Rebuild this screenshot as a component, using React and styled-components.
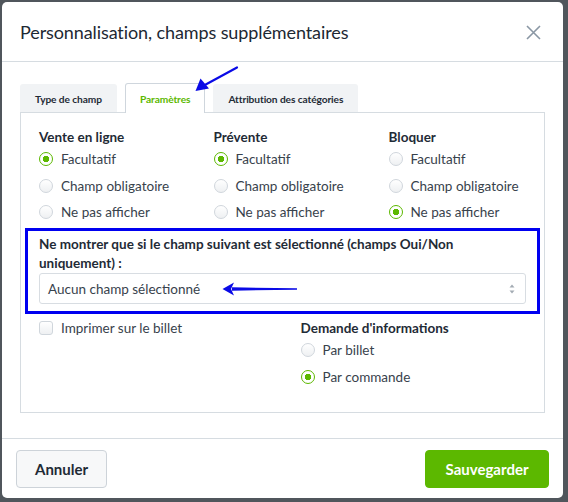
import React from 'react'
import styled, { createGlobalStyle } from 'styled-components'

const GlobalStyle = createGlobalStyle`
  html, body {
    margin: 0;
    padding: 0;
    background: #50565c;
    font-family: Lato, "Liberation Sans", sans-serif;
    color: #1f2b36;
  }
  * { box-sizing: border-box; }
`

const columns = [
  { title: 'Vente en ligne', checked: 0 },
  { title: 'Prévente', checked: 0 },
  { title: 'Bloquer', checked: 2 },
]
const options = ['Facultatif', 'Champ obligatoire', 'Ne pas afficher']

const Radio = ({ checked, label }) => (
  <OptionRow>
    <RadioDot $checked={checked} />
    <OptionLabel>{label}</OptionLabel>
  </OptionRow>
)

const App = () => (
  <Page>
    <GlobalStyle />
    <Modal>
      <Header>
        <Title>Personnalisation, champs supplémentaires</Title>
        <CloseButton aria-label="Fermer">
          <svg width="15" height="15" viewBox="0 0 15 15">
            <path d="M1 1L14 14M14 1L1 14" stroke="#8a97a4" strokeWidth="1.6" />
          </svg>
        </CloseButton>
      </Header>

      <Body>
        <Tabs>
          <Tab>Type de champ</Tab>
          <Tab $active>Paramètres</Tab>
          <Tab>Attribution des catégories</Tab>
        </Tabs>
        <Panel>
          <ColumnsGrid>
            {columns.map((col) => (
              <Column key={col.title}>
                <Heading>{col.title}</Heading>
                {options.map((opt, i) => (
                  <Radio key={opt} label={opt} checked={i === col.checked} />
                ))}
              </Column>
            ))}
          </ColumnsGrid>

          <Highlight>
            <FieldLabel>
              Ne montrer que si le champ suivant est sélectionné (champs Oui/Non uniquement) :
            </FieldLabel>
            <Select>
              <span>Aucun champ sélectionné</span>
              <SelectArrows>
                <svg width="6" height="10" viewBox="0 0 6 10">
                  <path d="M3 0.5L5.5 3.5H0.5Z" fill="#a3abb3" />
                  <path d="M3 9.5L5.5 6.5H0.5Z" fill="#a3abb3" />
                </svg>
              </SelectArrows>
            </Select>
          </Highlight>

          <BottomGrid>
            <OptionRow>
              <CheckBox />
              <OptionLabel>Imprimer sur le billet</OptionLabel>
            </OptionRow>
            <Column>
              <Heading>Demande d'informations</Heading>
              <Radio label="Par billet" checked={false} />
              <Radio label="Par commande" checked />
            </Column>
          </BottomGrid>
        </Panel>
      </Body>

      <Footer>
        <Button>Annuler</Button>
        <Button $primary>Sauvegarder</Button>
      </Footer>
    </Modal>

    <Annotations width="568" height="502" viewBox="0 0 568 502">
      <path d="M237 67.5L203 86" stroke="#0a0ae6" strokeWidth="2.2" strokeLinecap="round" />
      <path d="M195.5 91L200.5 78.5L209 88.5Z" fill="#0a0ae6" />
      <path d="M297 288.3L232 287.3L232 290.7L297 289.7Z" fill="#0a0ae6" />
      <path d="M222.5 289L234 282.5L231 289L234 295.5Z" fill="#0a0ae6" />
    </Annotations>
  </Page>
)

const Page = styled.div`
  position: relative;
  width: 568px;
  height: 502px;
  padding: 2px 5px 4px 2px;
`
const Modal = styled.div`
  width: 561px;
  height: 496px;
  background: #ffffff;
  border-radius: 5px;
  display: flex;
  flex-direction: column;
`
const Header = styled.div`
  height: 60px;
  flex: none;
  display: flex;
  align-items: center;
  justify-content: space-between;
  padding: 0 22px 0 18px;
  border-bottom: 1px solid #d6dce1;
`
const Title = styled.h1`
  margin: 0;
  font-size: 18px;
  font-weight: 400;
  color: #1d2833;
  letter-spacing: -0.1px;
`
const CloseButton = styled.button`
  border: none;
  background: none;
  padding: 0;
  display: flex;
  margin-top: 1px;
`
const Body = styled.div`
  flex: 1;
  padding: 21px 18px 24px;
`
const Tabs = styled.div`
  display: flex;
  gap: 8px;
  align-items: flex-end;
`
const Tab = styled.div`
  height: ${(p) => (p.$active ? '30px' : '28px')};
  margin-bottom: ${(p) => (p.$active ? '-1px' : '0')};
  padding: 0 14px;
  display: flex;
  align-items: center;
  font-size: 10.2px;
  letter-spacing: -0.1px;
  font-weight: 700;
  color: ${(p) => (p.$active ? '#5cb800' : '#1f2b36')};
  background: ${(p) => (p.$active ? '#ffffff' : '#f1f3f5')};
  border: 1px solid ${(p) => (p.$active ? '#cfd6dd' : 'transparent')};
  border-bottom: none;
  border-radius: 3px 3px 0 0;
  position: relative;
`
const Panel = styled.div`
  height: 301px;
  border: 1px solid #d6dce1;
  padding: 15px 4px 0;
`
const ColumnsGrid = styled.div`
  display: grid;
  grid-template-columns: 174.5px 175px 1fr;
  padding: 0 14px;
`
const Column = styled.div`
  display: flex;
  flex-direction: column;
`
const Heading = styled.div`
  font-size: 13.5px;
  font-weight: 700;
  line-height: 18px;
  color: #1f2b36;
`
const OptionRow = styled.div`
  height: 26.5px;
  display: flex;
  align-items: center;
  gap: 8px;
`
const RadioDot = styled.span`
  width: 14px;
  height: 14px;
  flex: none;
  border-radius: 50%;
  border: ${(p) => (p.$checked ? '1.5px solid #5cb800' : '1px solid #d0d6dc')};
  background: ${(p) =>
    p.$checked
      ? 'radial-gradient(circle, #5cb800 0 3px, #ffffff 3.5px)'
      : 'linear-gradient(#ffffff, #eef0f2)'};
`
const CheckBox = styled.span`
  width: 14px;
  height: 14px;
  flex: none;
  border-radius: 3px;
  border: 1px solid #d0d6dc;
  background: linear-gradient(#ffffff, #eef0f2);
`
const OptionLabel = styled.span`
  font-size: 13.5px;
  color: #38424c;
`
const Highlight = styled.div`
  margin-top: 2px;
  border: 3px solid #0000f0;
  padding: 4px 11px 7px;
`
const FieldLabel = styled.div`
  font-size: 13.5px;
  font-weight: 700;
  line-height: 19px;
  color: #1f2b36;
  padding-right: 40px;
`
const Select = styled.div`
  margin-top: 0.5px;
  height: 31px;
  border: 1px solid #d8dde2;
  border-radius: 3px;
  display: flex;
  align-items: center;
  justify-content: space-between;
  padding: 0 10px 0 8px;
  font-size: 13.5px;
  color: #38424c;
`
const SelectArrows = styled.span`
  display: flex;
`
const BottomGrid = styled.div`
  display: grid;
  grid-template-columns: 261.5px 1fr;
  align-items: start;
  padding: 5px 14px 0;
  & > ${OptionRow} {
    height: 18px;
  }
`
const Footer = styled.div`
  height: 60px;
  flex: none;
  border-top: 1px solid #d6dce1;
  display: flex;
  align-items: center;
  justify-content: space-between;
  padding: 1px 14px 0;
`
const Button = styled.button`
  height: 38px;
  padding: 0 ${(p) => (p.$primary ? '19.5px' : '18px')};
  border-radius: 4px;
  font-family: inherit;
  font-size: 15px;
  font-weight: 700;
  color: ${(p) => (p.$primary ? '#ffffff' : '#1f2b36')};
  background: ${(p) => (p.$primary ? '#5cb800' : '#f7f8f9')};
  border: 1px solid ${(p) => (p.$primary ? '#5cb800' : '#cdd3d9')};
`
const Annotations = styled.svg`
  position: absolute;
  left: 0;
  top: 0;
  pointer-events: none;
`

export default App
